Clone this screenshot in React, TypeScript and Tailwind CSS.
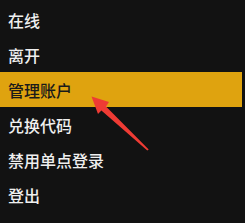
import React from 'react';

const items = ['在线', '离开', '管理账户', '兑换代码', '禁用单点登录', '登出'];
const active = 2;

export default function App() {
  return (
    <div className="relative w-[245px] h-[223px] overflow-hidden bg-[#121212] pt-[2px] font-['Noto_Sans_CJK_SC',sans-serif]">
      <ul className="flex flex-col">
        {items.map((label, i) => (
          <li
            key={label}
            className={
              i === active
                ? 'h-[35px] mr-[3px] flex items-center pl-[8px] text-[16px] font-medium bg-[#dfa30f] text-[#1a1a1a]'
                : 'h-[35px] mr-[3px] flex items-center pl-[8px] text-[16px] font-medium text-[#efefef]'
            }
          >
            {label}
          </li>
        ))}
      </ul>
      <svg className="absolute left-0 top-0 pointer-events-none" width="245" height="223" viewBox="0 0 245 223">
        <polygon
          points="91.5,96.5 109,102 106,106.6 148.7,149.5 147.3,150.5 101.4,110.4 98,114"
          fill="#ee3b34"
        />
      </svg>
    </div>
  );
}
